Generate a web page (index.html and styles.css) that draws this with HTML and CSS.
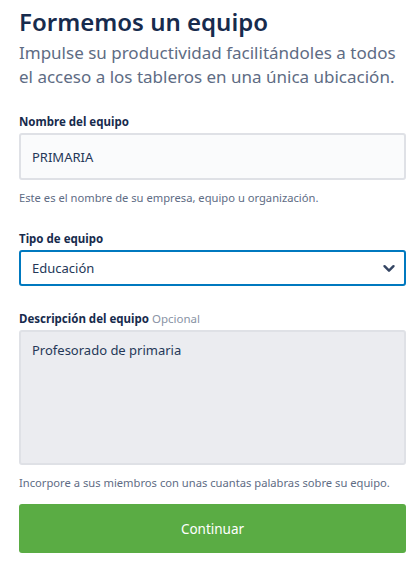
FILE: index.html
```html
<!DOCTYPE html>
<html lang="es">
<head>
<meta charset="utf-8">
<link rel="stylesheet" href="styles.css">
</head>
<body>
<main class="page">
  <h1 class="title">Formemos un equipo</h1>
  <p class="subtitle">Impulse su productividad facilitándoles a todos el acceso a los tableros en una única ubicación.</p>

  <div class="field">
    <label class="label">Nombre del equipo</label>
    <div class="input">PRIMARIA</div>
    <p class="help">Este es el nombre de su empresa, equipo u organización.</p>
  </div>

  <div class="field">
    <label class="label">Tipo de equipo</label>
    <div class="select">
      <span>Educación</span>
      <svg class="chev" width="14" height="9" viewBox="0 0 14 9"><path d="M2.5 2.2l4.5 4.5 4.5-4.5" fill="none" stroke="#344563" stroke-width="2.4" stroke-linecap="round" stroke-linejoin="round"/></svg>
    </div>
  </div>

  <div class="field">
    <label class="label">Descripción del equipo <span class="opt">Opcional</span></label>
    <div class="textarea">Profesorado de primaria</div>
    <p class="help">Incorpore a sus miembros con unas cuantas palabras sobre su equipo.</p>
  </div>

  <button class="btn">Continuar</button>
</main>
</body>
</html>
```

FILE: styles.css
```css
html, body {
  margin: 0;
  padding: 0;
  background: #fff;
}
body {
  font-family: "Noto Sans", "Open Sans", sans-serif;
  color: #172b4d;
}
.page {
  width: 387px;
  padding: 6px 0 0 19px;
}
.title {
  margin: 0;
  font-size: 24px;
  line-height: 32px;
  font-weight: 600;
  color: #172b4d;
}
.subtitle {
  margin: 3px 0 0;
  font-size: 17px;
  line-height: 24px;
  color: #5e6c84;
}
.field {
  margin-top: 25px;
}
.label {
  display: block;
  font-size: 11.5px;
  line-height: 16px;
  font-weight: 700;
  color: #172b4d;
  margin-bottom: 3px;
}
.opt {
  font-weight: 400;
  color: #8993a4;
}
.input {
  box-sizing: border-box;
  height: 47px;
  border: 2px solid #dfe1e6;
  border-radius: 3px;
  background: #fafbfc;
  padding: 0 11px;
  display: flex;
  align-items: center;
  font-size: 13px;
  color: #253858;
}
.help {
  margin: 10px 0 0;
  font-size: 11.2px;
  line-height: 16px;
  color: #5e6c84;
}
.select {
  box-sizing: border-box;
  height: 36px;
  border: 2px solid #0079bf;
  border-radius: 3px;
  background: #fff;
  padding: 0 8px 0 11px;
  display: flex;
  align-items: center;
  justify-content: space-between;
  font-size: 13px;
  color: #253858;
}
.textarea {
  box-sizing: border-box;
  height: 135px;
  border: 2px solid #dfe1e6;
  border-radius: 3px;
  background: #ebecf0;
  padding: 8px 11px;
  font-size: 13px;
  line-height: 20px;
  color: #253858;
}
.btn {
  display: block;
  width: 100%;
  height: 49px;
  margin-top: 13px;
  border: 0;
  border-radius: 3px;
  background: #5aac44;
  color: #fff;
  font-family: inherit;
  font-size: 13.5px;
}
```
